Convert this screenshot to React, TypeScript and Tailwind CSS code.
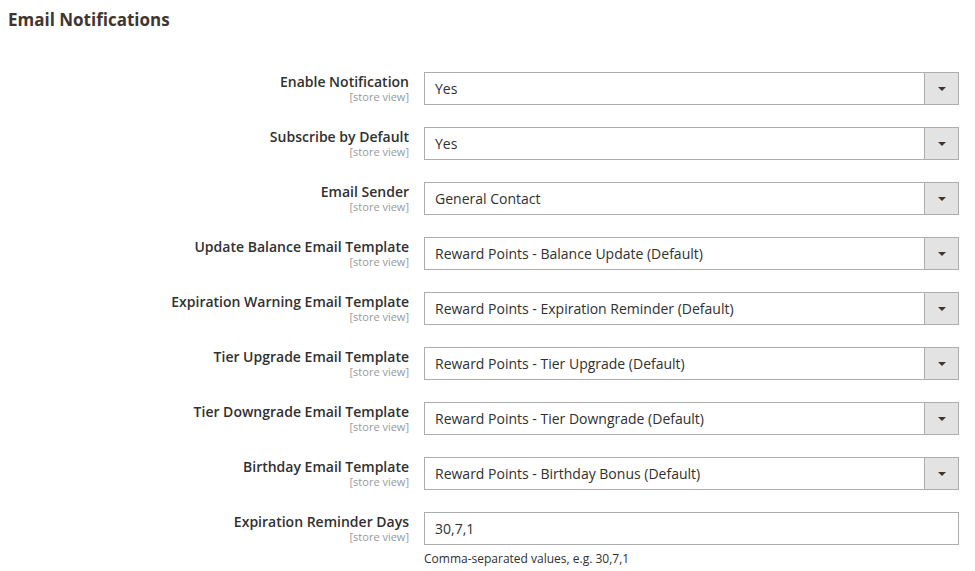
import React from 'react';

type Field = {
  label: string;
  value: string;
  kind: 'select' | 'text';
  note?: string;
};

const fields: Field[] = [
  { label: 'Enable Notification', value: 'Yes', kind: 'select' },
  { label: 'Subscribe by Default', value: 'Yes', kind: 'select' },
  { label: 'Email Sender', value: 'General Contact', kind: 'select' },
  { label: 'Update Balance Email Template', value: 'Reward Points - Balance Update (Default)', kind: 'select' },
  { label: 'Expiration Warning Email Template', value: 'Reward Points - Expiration Reminder (Default)', kind: 'select' },
  { label: 'Tier Upgrade Email Template', value: 'Reward Points - Tier Upgrade (Default)', kind: 'select' },
  { label: 'Tier Downgrade Email Template', value: 'Reward Points - Tier Downgrade (Default)', kind: 'select' },
  { label: 'Birthday Email Template', value: 'Reward Points - Birthday Bonus (Default)', kind: 'select' },
  { label: 'Expiration Reminder Days', value: '30,7,1', kind: 'text', note: 'Comma-separated values, e.g. 30,7,1' },
];

const SelectBox = ({ value }: { value: string }) => (
  <div className="flex h-[33px] border border-[#adadad] bg-white">
    <div className="flex-1 flex items-center pl-[10px] text-[14px] text-[#303030]">{value}</div>
    <div className="w-[34px] flex items-center justify-center bg-[#e3e3e3] border-l border-[#adadad]">
      <svg width="8" height="4" viewBox="0 0 8 4">
        <path d="M0 0h8L4 4z" fill="#41362f" />
      </svg>
    </div>
  </div>
);

const TextBox = ({ value }: { value: string }) => (
  <div className="flex items-center h-[33px] border border-[#adadad] bg-white pl-[10px] text-[14px] text-[#303030]">
    {value}
  </div>
);

export default function App() {
  return (
    <div className="w-[975px] h-[571px] bg-white overflow-hidden" style={{ fontFamily: '"Open Sans", sans-serif' }}>
      <h2 className="pl-2 pt-2 text-[17px] leading-[23px] font-bold text-[#41362f]">Email Notifications</h2>
      <div className="mt-[41px] flex flex-col gap-[22px]">
        {fields.map((f) => (
          <div key={f.label} className="flex">
            <div className="w-[409px] text-right">
              <span className="block pt-px text-[14px] leading-[18px] font-semibold text-[#303030]">{f.label}</span>
              <span className="block text-[11px] leading-[12px] text-[#999999]">[store view]</span>
            </div>
            <div className="ml-[15px] w-[535px]">
              {f.kind === 'select' ? <SelectBox value={f.value} /> : <TextBox value={f.value} />}
              {f.note && <div className="mt-[6px] text-[12px] leading-[16px] text-[#303030]">{f.note}</div>}
            </div>
          </div>
        ))}
      </div>
    </div>
  );
}
